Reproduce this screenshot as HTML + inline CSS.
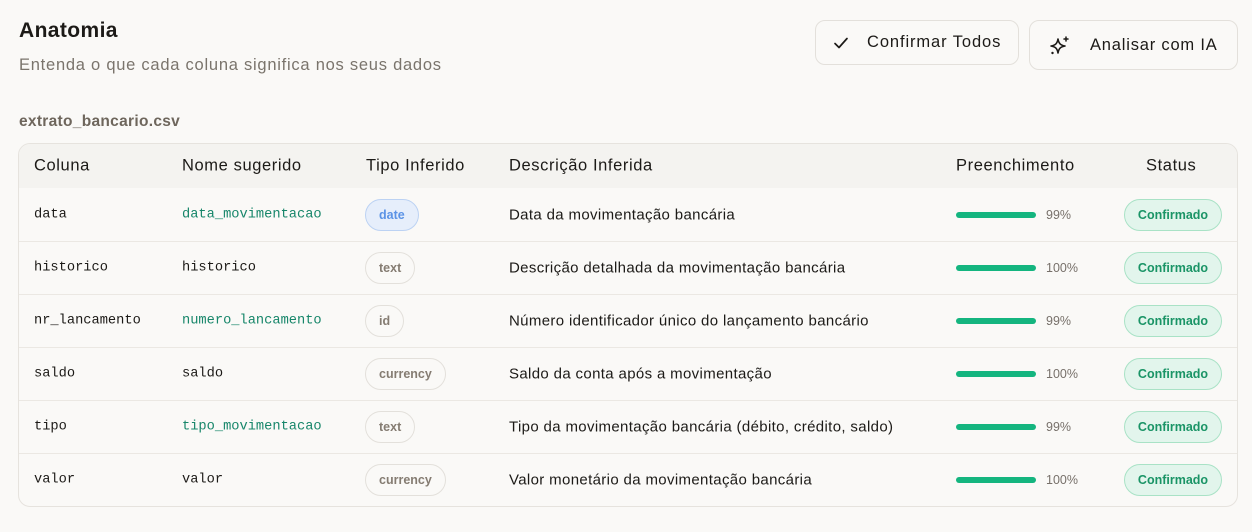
<!DOCTYPE html>
<html><head><meta charset="utf-8"><style>
*{box-sizing:border-box;margin:0;padding:0}
body{width:1252px;height:532px;background:#faf9f7;font-family:"Liberation Sans",sans-serif;color:#1c1a17;position:relative;overflow:hidden}
h1{position:absolute;left:19px;top:19px;font-size:21px;font-weight:bold;letter-spacing:0.4px}
.sub{position:absolute;left:19px;top:56px;font-size:16.5px;color:#7a746c;letter-spacing:0.75px}
.file{position:absolute;left:19px;top:113px;font-size:15.5px;font-weight:bold;color:#6e665c;letter-spacing:0.3px}
.btn{position:absolute;border:1px solid #e3e0db;border-radius:10px;background:#faf9f7;font-size:16.5px;display:flex;align-items:center}
.tbl{position:absolute;left:18px;top:143px;width:1220px;height:364px;border:1px solid #e6e3de;border-radius:12px;overflow:hidden}
.hd{height:44px;background:#f4f3f0;position:relative;font-size:16.5px;letter-spacing:0.6px}
.row{height:53px;border-top:1px solid #ebe8e3;position:relative}
.c{position:absolute;top:50%;transform:translateY(-50%);white-space:nowrap}
.mono{font-family:"Liberation Mono",monospace;font-size:13.7px}
.g{color:#17866a}
.bd{border:1px solid #e3e0db;border-radius:16px;height:32px;line-height:30px;padding:0 13px;font-size:12.5px;font-weight:bold;color:#857c72}
.bd.b{background:#e6eefb;border-color:#bcd2f3;color:#5b93e6}
.bar{width:80px;height:6px;border-radius:3px;background:#14b57f}
.pct{font-size:12.5px;color:#77706a}
.ok{border:1px solid #a9e2c6;background:#e2f5ec;color:#1a9466;border-radius:16px;height:32px;line-height:30px;width:98px;text-align:center;font-size:12.5px;font-weight:bold}
.d{font-size:15px;letter-spacing:0.35px}
</style></head><body>
<h1>Anatomia</h1>
<div class="sub">Entenda o que cada coluna significa nos seus dados</div>
<div class="file">extrato_bancario.csv</div>
<div class="btn" style="left:815px;top:20px;width:204px;height:45px">
<svg style="position:absolute;left:17px;top:15px" width="16" height="14" viewBox="0 0 16 14"><path d="M2 7.5l4 4L14 2.5" fill="none" stroke="#1c1a17" stroke-width="1.7" stroke-linecap="round" stroke-linejoin="round"/></svg>
<span style="position:absolute;left:51px;letter-spacing:0.9px">Confirmar Todos</span></div>
<div class="btn" style="left:1029px;top:20px;width:209px;height:50px">
<svg style="position:absolute;left:19px;top:14px" width="22" height="22" viewBox="0 0 22 22"><path d="M9 4 C9.8 8.5 11.5 10.2 16 11 C11.5 11.8 9.8 13.5 9 18 C8.2 13.5 6.5 11.8 2 11 C6.5 10.2 8.2 8.5 9 4Z" fill="none" stroke="#1c1a17" stroke-width="1.6" stroke-linejoin="round"/><path d="M17 2v4M15 4h4" stroke="#1c1a17" stroke-width="1.5" stroke-linecap="round"/><circle cx="3.5" cy="18" r="1.2" fill="#1c1a17"/></svg>
<span style="position:absolute;left:60px;letter-spacing:0.8px">Analisar com IA</span></div>
<div class="tbl">
<div class="hd"><span class="c" style="left:15px">Coluna</span><span class="c" style="left:163px">Nome sugerido</span><span class="c" style="left:347px">Tipo Inferido</span><span class="c" style="left:490px">Descrição Inferida</span><span class="c" style="left:937px">Preenchimento</span><span class="c" style="left:1127px">Status</span></div>

<div class="row" style="border-top:none"><span class="c mono" style="left:15px">data</span><span class="c mono g" style="left:163px">data_movimentacao</span><span class="c bd b" style="left:346px">date</span><span class="c d" style="left:490px">Data da movimentação bancária</span><span class="c bar" style="left:937px"></span><span class="c pct" style="left:1027px">99%</span><span class="c ok" style="left:1105px">Confirmado</span></div>
<div class="row"><span class="c mono" style="left:15px">historico</span><span class="c mono" style="left:163px">historico</span><span class="c bd" style="left:346px">text</span><span class="c d" style="left:490px">Descrição detalhada da movimentação bancária</span><span class="c bar" style="left:937px"></span><span class="c pct" style="left:1027px">100%</span><span class="c ok" style="left:1105px">Confirmado</span></div>
<div class="row"><span class="c mono" style="left:15px">nr_lancamento</span><span class="c mono g" style="left:163px">numero_lancamento</span><span class="c bd" style="left:346px">id</span><span class="c d" style="left:490px">Número identificador único do lançamento bancário</span><span class="c bar" style="left:937px"></span><span class="c pct" style="left:1027px">99%</span><span class="c ok" style="left:1105px">Confirmado</span></div>
<div class="row"><span class="c mono" style="left:15px">saldo</span><span class="c mono" style="left:163px">saldo</span><span class="c bd" style="left:346px">currency</span><span class="c d" style="left:490px">Saldo da conta após a movimentação</span><span class="c bar" style="left:937px"></span><span class="c pct" style="left:1027px">100%</span><span class="c ok" style="left:1105px">Confirmado</span></div>
<div class="row"><span class="c mono" style="left:15px">tipo</span><span class="c mono g" style="left:163px">tipo_movimentacao</span><span class="c bd" style="left:346px">text</span><span class="c d" style="left:490px">Tipo da movimentação bancária (débito, crédito, saldo)</span><span class="c bar" style="left:937px"></span><span class="c pct" style="left:1027px">99%</span><span class="c ok" style="left:1105px">Confirmado</span></div>
<div class="row"><span class="c mono" style="left:15px">valor</span><span class="c mono" style="left:163px">valor</span><span class="c bd" style="left:346px">currency</span><span class="c d" style="left:490px">Valor monetário da movimentação bancária</span><span class="c bar" style="left:937px"></span><span class="c pct" style="left:1027px">100%</span><span class="c ok" style="left:1105px">Confirmado</span></div>
</div>
</body></html>
